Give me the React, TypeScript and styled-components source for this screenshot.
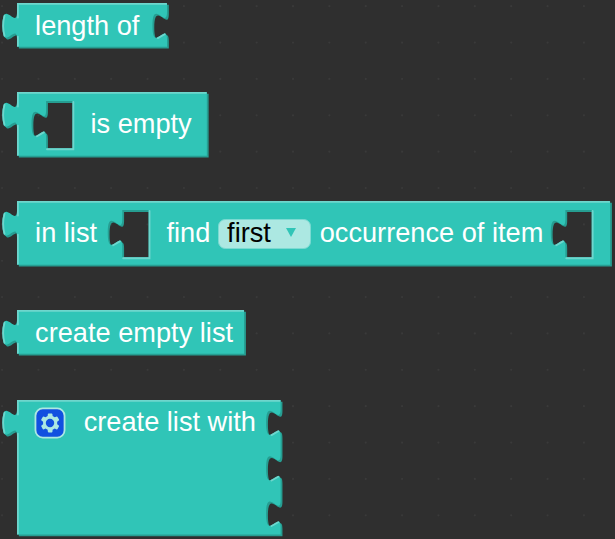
import React from "react";
import styled, { createGlobalStyle } from "styled-components";

/* Block geometry is in workspace units, drawn at this zoom. */
const ZOOM = 20 / 11;

const TEAL = "#30c5b7";
const TEAL_DARK = "#269e92";
const TEAL_LIGHT = "#6ed6cd";
const TEAL_PALE = "#ace8e2";

const GlobalStyle = createGlobalStyle`
  html, body { margin: 0; background: #2f2f2f; }
  body { overflow: hidden; }
`;

const Workspace = styled.main`
  position: relative;
  box-sizing: border-box;
  width: 615px;
  height: 539px;
  padding: 3.2px 0 0 17.3px;
  display: flex;
  flex-direction: column;
  align-items: flex-start;
  gap: ${25 * ZOOM}px;
  overflow: hidden;
  background: #2f2f2f;
  font-family: "Liberation Sans", Arial, sans-serif;
  font-size: 27.2px;
  color: #fff;
`;

const GridLayer = styled.svg`
  position: absolute;
  inset: 0;
  width: 100%;
  height: 100%;
`;

const BlockBox = styled.section<{ $w: number; $h: number }>`
  position: relative;
  flex: none;
  width: ${(p) => p.$w * ZOOM}px;
  height: ${(p) => p.$h * ZOOM}px;
`;

const Outline = styled.svg`
  position: absolute;
  left: 0;
  top: 0;
  width: 1px;
  height: 1px;
  overflow: visible;
`;

const Fields = styled.div<{ $top: number }>`
  position: relative;
  display: flex;
  align-items: flex-start;
  padding: ${(p) => p.$top}px 0 0 17.8px;
`;

const Label = styled.span<{ $before?: number; $w?: number }>`
  flex: none;
  margin-left: ${(p) => p.$before ?? 0}px;
  width: ${(p) => (p.$w ? `${p.$w}px` : "auto")};
  line-height: 30px;
  white-space: pre;
`;

const Dropdown = styled.button`
  flex: none;
  display: flex;
  align-items: center;
  justify-content: space-between;
  box-sizing: border-box;
  width: 93px;
  height: 30px;
  margin: 1px 0 0 8px;
  padding: 0 14px 0 8px;
  border: 1px solid #7bdad2;
  border-radius: 7.3px;
  background: ${TEAL_PALE};
  color: #000;
  font: inherit;
  line-height: 28px;
`;

const DropdownText = styled.span`
  margin-top: -2px;
`;

const Arrow = styled.svg`
  width: 10px;
  height: 9px;
  margin-top: -3px;
`;

const GearIcon = styled.svg`
  flex: none;
  width: 32px;
  height: 32px;
  margin: 0 0 0 -1.4px;
  overflow: visible;
`;

const SOCKET_DOWN = "c 0,10 -8,-8 -8,7.5 s 8,-2.5 8,7.5";
const TAB_UP = "c 0,-10 -8,8 -8,-7.5 s 8,2.5 8,-7.5";

type BlockProps = {
  w: number;
  h: number;
  labelTop: number;
  /** Top offsets of the sockets along the right edge. */
  sockets?: number[];
  /** Left offsets of the empty inline inputs. */
  inlines?: number[];
  children: React.ReactNode;
};

function Block({ w, h, labelTop, sockets = [], inlines = [], children }: BlockProps) {
  const right = sockets.map((y) => `V ${y + 5} ${SOCKET_DOWN}`).join(" ");
  const holes = inlines
    .map((x) => `M ${x},5 v 5 ${SOCKET_DOWN} v 6 h 14.5 v -26 z`)
    .join(" ");
  const body = `M 0,0 H ${w} ${right} V ${h} H 0 V 20 ${TAB_UP} z ${holes}`;

  const edge = `M 0.5,${h - 0.5} V 18.5 m -7.36,-0.5 q -1.52,-5.5 0,-11 m 7.36,1 V 0.5 H ${w - 0.5}`;
  const socketLips = sockets.map((y) => `M ${w - 5},${y + 19.3} l 3.68,-2.1`).join(" ");
  const holeLips = inlines
    .map((x) => `M ${x + 15},5.5 v 26 h -14.5 M ${x - 5},24.3 l 3.68,-2.1`)
    .join(" ");

  return (
    <BlockBox $w={w} $h={h}>
      <Outline aria-hidden="true">
        <g transform={`scale(${ZOOM})`} fillRule="evenodd">
          <path d={body} fill={TEAL_DARK} transform="translate(1 1)" />
          <path d={body} fill={TEAL} />
          <path
            d={`${edge} ${socketLips} ${holeLips}`}
            fill="none"
            stroke={TEAL_LIGHT}
            strokeLinecap="round"
          />
        </g>
      </Outline>
      <Fields $top={labelTop}>{children}</Fields>
    </BlockBox>
  );
}

function Grid() {
  const pitch = 20 * ZOOM;
  return (
    <GridLayer aria-hidden="true">
      {Array.from({ length: 15 * 17 }, (_, i) => (
        <circle
          key={i}
          cx={2.1 + (i % 17) * pitch}
          cy={6.2 + Math.floor(i / 17) * pitch}
          r="1.1"
          fill="#3a3a3a"
        />
      ))}
    </GridLayer>
  );
}

function Gear() {
  return (
    <GearIcon viewBox="-0.8 -0.8 17.6 17.6" role="img" aria-label="Settings">
      <rect width="16" height="16" rx="4" fill="#1150e0" stroke={TEAL_PALE} />
      <path
        fill={TEAL_PALE}
        d="m4.203,7.296 0,1.368 -0.92,0.677 -0.11,0.479 0.9,1.56 0.41,0.15 1.04,-0.46 1.18,0.68 0.12,1.13 0.35,0.35 1.8,0 0.34,-0.34 0.13,-1.14 1.17,-0.68 1.05,0.46 0.41,-0.15 0.9,-1.56 -0.11,-0.48 -0.92,-0.68 0,-1.36 0.92,-0.68 0.11,-0.48 -0.9,-1.56 -0.41,-0.15 -1.05,0.46 -1.17,-0.68 -0.13,-1.13 -0.34,-0.35 -1.8,0 -0.35,0.35 -0.12,1.13 -1.18,0.68 -1.04,-0.46 -0.41,0.15 -0.9,1.56 0.11,0.48 0.92,0.68z"
      />
      <circle cx="8" cy="8" r="2.3" fill="#1150e0" />
    </GearIcon>
  );
}

export default function App() {
  return (
    <>
      <GlobalStyle />
      <Workspace>
        <Grid />
        <Block w={82.5} h={24} labelTop={8} sockets={[0]}>
          <Label>length of</Label>
        </Block>
        <Block w={104.4} h={35} labelTop={17} inlines={[16]}>
          <Label $before={55.4}>is empty</Label>
        </Block>
        <Block w={326.2} h={35} labelTop={16.5} inlines={[57.9, 301.6]}>
          <Label $w={62}>in list</Label>
          <Label $before={69.4} $w={43.6}>find</Label>
          <Dropdown type="button">
            <DropdownText>first</DropdownText>
            <Arrow viewBox="0 0 10 9">
              <path d="M0 0 H10 L5 9 Z" fill={TEAL} />
            </Arrow>
          </Dropdown>
          <Label $before={8.6}>occurrence of item</Label>
        </Block>
        <Block w={124.9} h={24} labelTop={7.5}>
          <Label>create empty list</Label>
        </Block>
        <Block w={145} h={74} labelTop={7} sockets={[0, 25, 50]}>
          <Gear />
          <Label $before={18}>create list with</Label>
        </Block>
      </Workspace>
    </>
  );
}
